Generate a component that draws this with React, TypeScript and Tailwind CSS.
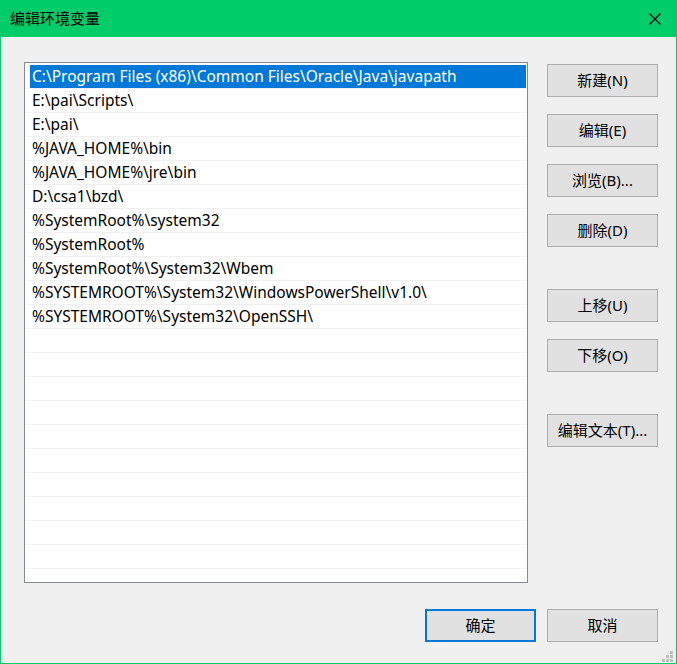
import React from "react";

const paths = [
  "C:\\Program Files (x86)\\Common Files\\Oracle\\Java\\javapath",
  "E:\\pai\\Scripts\\",
  "E:\\pai\\",
  "%JAVA_HOME%\\bin",
  "%JAVA_HOME%\\jre\\bin",
  "D:\\csa1\\bzd\\",
  "%SystemRoot%\\system32",
  "%SystemRoot%",
  "%SystemRoot%\\System32\\Wbem",
  "%SYSTEMROOT%\\System32\\WindowsPowerShell\\v1.0\\",
  "%SYSTEMROOT%\\System32\\OpenSSH\\",
];

const font = { fontFamily: '"Noto Sans", "Noto Sans CJK SC", sans-serif' };

const Btn = ({ label, primary }: { label: string; primary?: boolean }) => (
  <button
    className={
      "w-[111px] h-[33px] bg-[#e1e1e1] text-[15px] text-black flex items-center justify-center " +
      (primary ? "border-2 border-[#0078d7]" : "border border-[#adadad]")
    }
  >
    {label}
  </button>
);

const App = () => {
  const rows = [...paths, ...Array(11).fill("")];

  return (
    <div className="w-[677px] h-[664px] bg-[#00cc6a] px-px pb-px flex flex-col" style={font}>
      {/* title bar */}
      <div className="h-[37px] flex items-center justify-between pl-[9px] pr-[15px]">
        <span className="text-[15px] text-black">编辑环境变量</span>
        <svg width="12" height="12" viewBox="0 0 12 12">
          <path d="M0.5 0.5L11.5 11.5M11.5 0.5L0.5 11.5" stroke="#000" strokeWidth="1.1" />
        </svg>
      </div>

      {/* body */}
      <div className="flex-1 bg-[#f0f0f0] relative flex flex-col pl-[23px] pt-[25px]">
        <div className="flex">
          <div className="w-[504px] h-[521px] bg-white border border-[#828790] overflow-hidden pt-[2px]">
            {rows.map((p, i) => (
              <div key={i} className="mx-px h-[24px] border-b border-[#f0f0f0] pl-[4px]">
                <div
                  className={
                    "h-[23px] leading-[23px] pl-[2px] text-[15.5px] whitespace-nowrap " +
                    (i === 0 ? "bg-[#0078d7] text-white" : "text-black")
                  }
                >
                  {p}
                </div>
              </div>
            ))}
          </div>

          <div className="ml-[19px] mt-[2px] flex flex-col">
            <Btn label="新建(N)" />
            <div className="mt-[17px]"><Btn label="编辑(E)" /></div>
            <div className="mt-[17px]"><Btn label="浏览(B)..." /></div>
            <div className="mt-[17px]"><Btn label="删除(D)" /></div>
            <div className="mt-[42px]"><Btn label="上移(U)" /></div>
            <div className="mt-[17px]"><Btn label="下移(O)" /></div>
            <div className="mt-[42px]"><Btn label="编辑文本(T)..." /></div>
          </div>
        </div>

        <div className="flex justify-end gap-[11px] mt-[26px] pr-[18px]">
          <Btn label="确定" primary />
          <Btn label="取消" />
        </div>

        {/* size grip */}
        <svg className="absolute right-[3px] bottom-[1px]" width="11" height="11" viewBox="0 0 11 11">
          <g fill="#bfbfbf">
            <rect x="8" y="0" width="3" height="3" />
            <rect x="4" y="4" width="3" height="3" />
            <rect x="8" y="4" width="3" height="3" />
            <rect x="0" y="8" width="3" height="3" />
            <rect x="4" y="8" width="3" height="3" />
            <rect x="8" y="8" width="3" height="3" />
          </g>
        </svg>
      </div>
    </div>
  );
};

export default App;
